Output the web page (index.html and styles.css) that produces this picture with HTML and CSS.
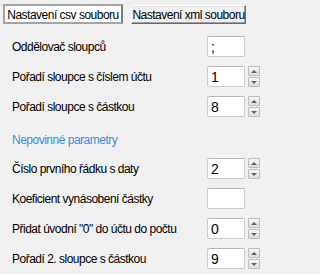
FILE: index.html
```html
<!DOCTYPE html>
<html lang="cs">
<head>
<meta charset="utf-8">
<title>Nastavení</title>
<link rel="stylesheet" href="styles.css">
</head>
<body>
<div class="tabs">
  <div class="tab tab-active">Nastavení csv souboru</div>
  <div class="tab tab-idle">Nastavení xml souboru</div>
</div>
<div class="form">
  <div class="row">
    <span class="label">Oddělovač sloupců</span>
    <div class="input">;</div>
    <span class="spacer"></span>
  </div>
  <div class="row">
    <span class="label">Pořadí sloupce s číslem účtu</span>
    <div class="input">1</div>
    <div class="spin"><span class="btn up"></span><span class="btn down"></span></div>
  </div>
  <div class="row">
    <span class="label">Pořadí sloupce s částkou</span>
    <div class="input">8</div>
    <div class="spin"><span class="btn up"></span><span class="btn down"></span></div>
  </div>
  <div class="row heading">
    <span class="label">Nepovinné parametry</span>
  </div>
  <div class="row">
    <span class="label">Číslo prvního řádku s daty</span>
    <div class="input">2</div>
    <div class="spin"><span class="btn up"></span><span class="btn down"></span></div>
  </div>
  <div class="row">
    <span class="label">Koeficient vynásobení částky</span>
    <div class="input"></div>
    <span class="spacer"></span>
  </div>
  <div class="row">
    <span class="label">Přidat úvodní "0" do účtu do počtu</span>
    <div class="input">0</div>
    <div class="spin"><span class="btn up"></span><span class="btn down"></span></div>
  </div>
  <div class="row">
    <span class="label">Pořadí 2. sloupce s částkou</span>
    <div class="input">9</div>
    <div class="spin"><span class="btn up"></span><span class="btn down"></span></div>
  </div>
</div>
</body>
</html>
```
FILE: styles.css
```css
html, body {
  margin: 0;
  padding: 0;
  background: #f0f0f0;
}
body {
  width: 265px;
  height: 274px;
  overflow: hidden;
  font-family: "Liberation Sans", Arial, sans-serif;
  font-size: 12px;
  letter-spacing: -0.5px;
  color: #000;
}
.tabs {
  display: flex;
  align-items: flex-start;
  gap: 8px;
  padding: 4px 0 0 3px;
}
.tab {
  box-sizing: border-box;
  display: flex;
  align-items: center;
  justify-content: center;
  white-space: nowrap;
}
.tab-active {
  width: 120px;
  height: 20px;
  background: #ffffff;
  border: 2px solid #a4a4a4;
  border-right-color: #7a7a7a;
  padding-top: 1px;
}
.tab-idle {
  width: 115px;
  height: 19px;
  margin-top: 1px;
  background: #f0f0f0;
  border: 1px solid;
  border-color: #ffffff #696969 #696969 #ffffff;
  box-shadow: inset -1px -1px 0 #a0a0a0, inset 1px 1px 0 #e3e3e3;
  padding-top: 1px;
}
.form {
  display: flex;
  flex-direction: column;
  gap: 9px;
  padding-top: 12px;
}
.row {
  display: flex;
  align-items: center;
  height: 21px;
  padding: 0 5px 0 12px;
}
.label {
  flex: 1;
  white-space: nowrap;
  padding-top: 1px;
}
.heading {
  margin-top: 3px;
  margin-bottom: -1px;
}
.heading .label {
  color: #3b8fe3;
}
.input {
  box-sizing: border-box;
  width: 38px;
  height: 21px;
  background: #ffffff;
  border: 1px solid #cacaca;
  border-top-color: #b8b8b8;
  border-radius: 2px;
  font-size: 14px;
  letter-spacing: 0;
  line-height: 16px;
  padding: 2px 0 0 3px;
}
.spacer {
  width: 15px;
}
.spin {
  width: 12px;
  height: 21px;
  margin-left: 3px;
  display: flex;
  flex-direction: column;
  gap: 1px;
}
.btn {
  box-sizing: border-box;
  height: 10px;
  border: 1px solid #bdbdbd;
  border-radius: 1px;
  background: linear-gradient(#f6f6f6, #dedede);
  display: flex;
  align-items: center;
  justify-content: center;
}
.btn::after {
  content: "";
  width: 0;
  height: 0;
  border-left: 3px solid transparent;
  border-right: 3px solid transparent;
}
.up::after {
  border-bottom: 3px solid #5a6472;
}
.down::after {
  border-top: 3px solid #5a6472;
}
```
